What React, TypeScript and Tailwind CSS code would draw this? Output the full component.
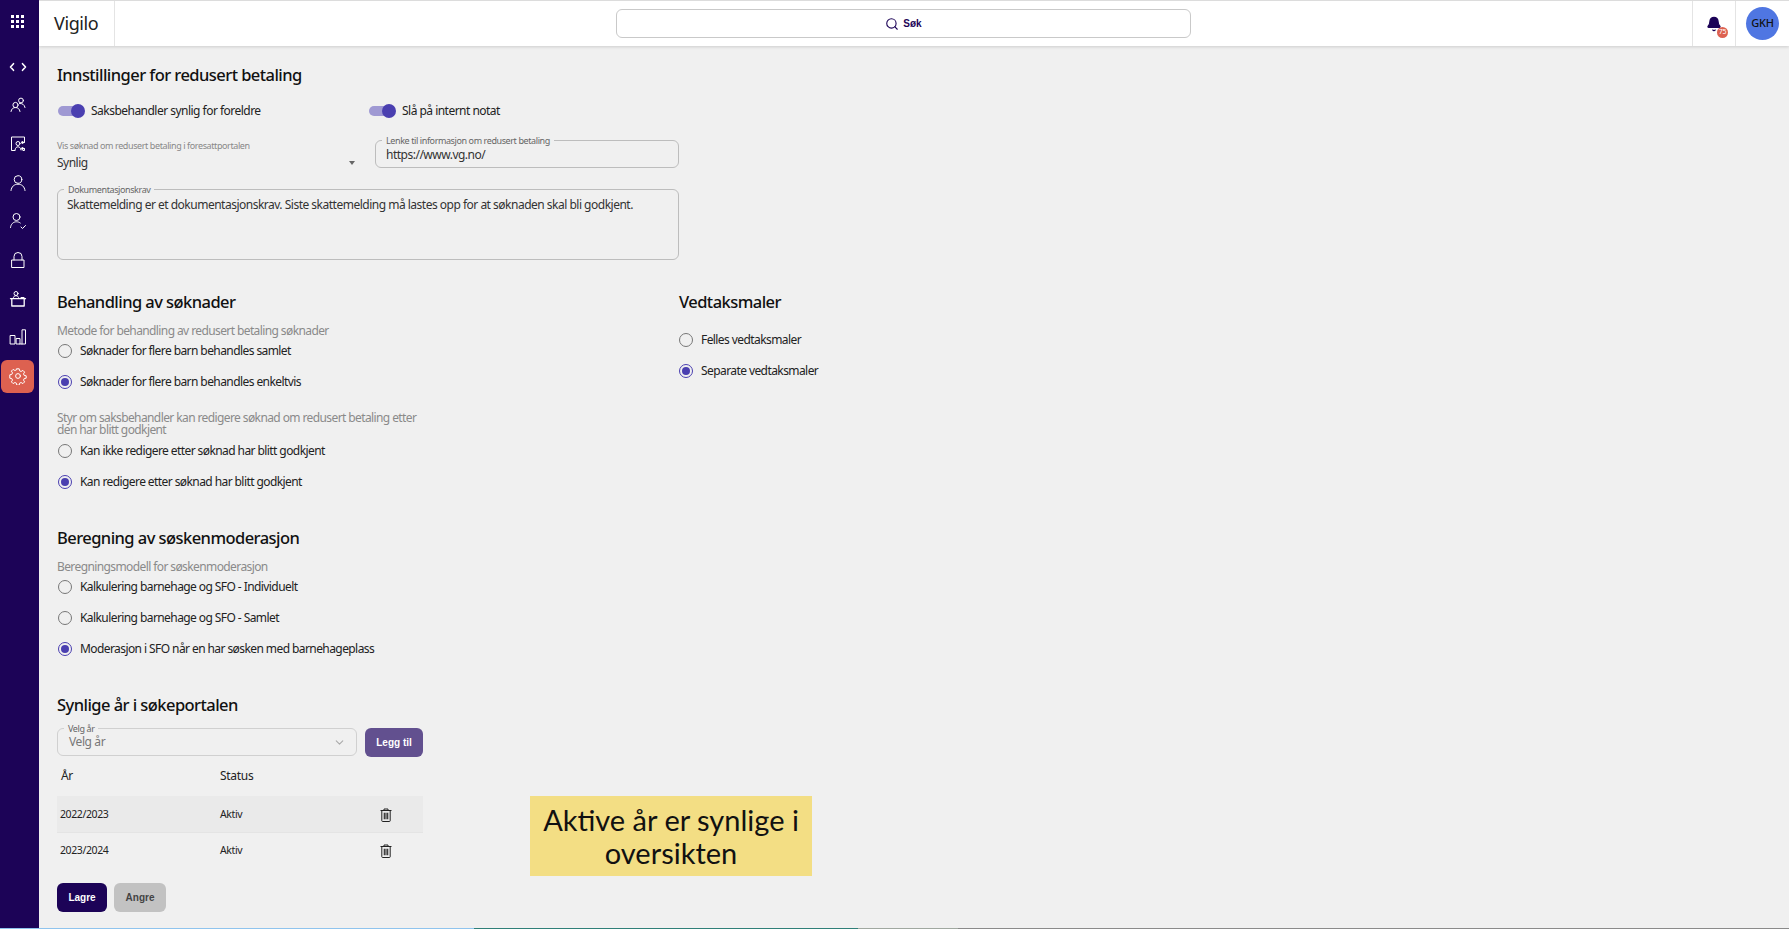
import React from 'react';
import { Bell, ChevronDown, Search } from 'lucide-react';

const font = 'font-["Noto_Sans",sans-serif]';

const SideIcon = ({ children, active = false }: { children: React.ReactNode; active?: boolean }) => (
  <div className={`flex h-[33px] w-[33px] items-center justify-center rounded-md ${active ? 'bg-[#dd6150]' : ''}`}>
    <svg width="18" height="18" viewBox="0 0 18 18" fill="none" stroke="white" strokeWidth="1" strokeLinecap="round" strokeLinejoin="round">
      {children}
    </svg>
  </div>
);

const Toggle = ({ label, className = '' }: { label: string; className?: string }) => (
  <div className={`flex items-center ${className}`}>
    <div className="relative h-[10px] w-[26px] rounded-full bg-[#9f99d3]">
      <div className="absolute -top-[2px] left-[13px] h-[14px] w-[14px] rounded-full bg-[#4a3fb0]" />
    </div>
    <span className="ml-[7px] text-[12px] leading-4 tracking-[-0.52px] text-[#222]">{label}</span>
  </div>
);

const Radio = ({ label, checked = false }: { label: string; checked?: boolean }) => (
  <div className="flex h-[31px] items-center pl-[1px]">
    <div className={`flex h-[14px] w-[14px] items-center justify-center rounded-full border-[1.5px] ${checked ? 'border-[#4a3fb0]' : 'border-[#777]'}`}>
      {checked && <div className="h-[8px] w-[8px] rounded-full bg-[#4a3fb0]" />}
    </div>
    <span className="ml-[8px] text-[12px] leading-4 tracking-[-0.58px] text-[#222]">{label}</span>
  </div>
);

const Heading = ({ children }: { children: React.ReactNode }) => (
  <h2 className="text-[16.5px] leading-6 font-medium tracking-[-0.55px] text-[#111]">{children}</h2>
);

const Hint = ({ children }: { children: React.ReactNode }) => (
  <p className="text-[12px] leading-[12px] tracking-[-0.6px] text-[#8a8a8a]">{children}</p>
);

const Legend = ({ children }: { children: React.ReactNode }) => (
  <span className="absolute -top-[6px] left-[6px] bg-[#f0f0f0] px-[4px] text-[9px] leading-[11px] tracking-[-0.4px] text-[#666]">{children}</span>
);

const Trash = () => (
  <svg width="12" height="14" viewBox="0 0 12 14" fill="none" stroke="#222" strokeWidth="1">
    <path d="M.5 2.5h11M4 2.5V1h4v1.5M1.8 2.5v10.3c0 .4.3.7.7.7h7c.4 0 .7-.3.7-.7V2.5" />
    <path d="M4.3 4.8v6.4M6 4.8v6.4M7.700 4.8v6.4" strokeWidth="1.1" />
  </svg>
);

const YearRow = ({ year, shaded = false }: { year: string; shaded?: boolean }) => (
  <div className={`flex items-center text-[10.5px] tracking-[-0.4px] text-[#222] ${shaded ? 'h-[37px] border-b border-[#e4e4e4] bg-[#eaeaea] pt-[1px]' : 'h-[36px]'}`}>
    <span className="ml-[3px] w-[160px]">{year}</span>
    <span className="w-[159.500px]">Aktiv</span>
    <Trash />
  </div>
);

export default function App() {
  return (
    <div className={`${font} flex h-[929px] w-[1789px] flex-col overflow-hidden bg-[#f0f0f0]`}>
      <div className="flex min-h-0 flex-1">
        {/* Sidebar */}
        <aside className="flex w-[39px] shrink-0 flex-col bg-[#1c0357] pt-[5px] pl-[1px]">
          <div className="flex h-[33px] w-[33px] items-center justify-center">
            <div className="grid grid-cols-3 gap-[1.5px]">
              {Array.from({ length: 9 }).map((_, i) => (
                <div key={i} className="h-[3.5px] w-[3.5px] bg-white" />
              ))}
            </div>
          </div>
          <div className="mt-[12px] flex flex-col gap-[5.7px]">
            <SideIcon>
              <path d="M4.500 5.700 1.500 9l3 3.300M13.500 5.700l3 3.300-3 3.300" strokeWidth="1.6" />
            </SideIcon>
            <SideIcon>
              <circle cx="6.500" cy="9" r="2.600" />
              <path d="M2 15.500c.4-2.600 2.200-4 4.500-4s4.100 1.400 4.500 4" />
              <circle cx="12" cy="4.500" r="2.400" />
              <path d="M10.500 7.500c2.800-.3 4.900 1 5.500 4" />
            </SideIcon>
            <SideIcon>
              <path d="M6 15.500H2.500V2h13v5.500M15.500 13.500v2H14" />
              <circle cx="9" cy="8.500" r="2" />
              <path d="M6 15c.4-2.200 1.500-3.200 3-3.200s2.600 1 3 3.200" />
              <circle cx="13.500" cy="7.500" r="1" fill="white" />
              <circle cx="13.500" cy="13.500" r="1" fill="white" />
            </SideIcon>
            <SideIcon>
              <circle cx="9" cy="5.500" r="3.800" />
              <path d="M2 16.500c.5-4 3.200-6.300 7-6.300s6.500 2.300 7 6.300" />
            </SideIcon>
            <SideIcon>
              <circle cx="7.500" cy="5" r="3.500" />
              <path d="M1.500 15.500c.4-3.500 2.800-5.700 6-5.700 1.500 0 2.800.4 3.800 1.200M12 15l1.500 1.500 3-3" />
            </SideIcon>
            <SideIcon>
              <rect x="3" y="9" width="12" height="7.500" />
              <path d="M5 9V5.500a4 4 0 0 1 8 0V9" />
            </SideIcon>
            <SideIcon>
              <circle cx="7" cy="3.500" r="2" />
              <path d="M4.300 8.500c0-1.900 1-2.800 2.700-2.800s2.700.9 2.700 2.800M12 7.500h3" />
              <path d="M1.500 8.700h15M2.800 8.700V16h12.400V8.700" strokeWidth="1.300" />
            </SideIcon>
            <SideIcon>
              <rect x="1.500" y="7.500" width="4.500" height="8.500" />
              <rect x="7.500" y="10.500" width="3.500" height="5.500" />
              <path d="M11 16h5.500V1.800h-3.500V16" />
            </SideIcon>
            <SideIcon active>
              <circle cx="9" cy="9" r="2.400" />
              <path d="M7.800 1.800h2.400l.4 2 1.500.7 1.800-1.100 1.700 1.700-1.100 1.800.7 1.500 2 .4v2.400l-2 .4-.7 1.500 1.100 1.800-1.700 1.700-1.800-1.100-1.500.7-.4 2H7.800l-.4-2-1.500-.7-1.800 1.100-1.700-1.700 1.100-1.800-.7-1.500-2-.4V7.800l2-.4.7-1.500-1.100-1.800 1.700-1.700 1.800 1.100 1.500-.7z" />
            </SideIcon>
          </div>
        </aside>

        <div className="flex min-w-0 flex-1 flex-col">
          {/* Header */}
          <header className="flex h-[46px] shrink-0 items-stretch border-t border-[#dcdcdc] bg-white shadow-[0_1px_3px_rgba(0,0,0,0.15)]">
            <div className="flex w-[76px] items-center border-r border-[#e4e4e4] pl-[15px] text-[18px] tracking-[-0.4px] text-[#222]">Vigilo</div>
            <div className="flex flex-1 items-center justify-center">
              <div className="flex h-[29px] w-[575px] items-center justify-center gap-[4px] rounded-md border border-[#c9c9c9] bg-white">
                <Search size={14} strokeWidth={1.9} className="text-[#1c0357]" />
                <span className="font-['Liberation_Sans',sans-serif] text-[10px] font-bold text-[#1c0357]">Søk</span>
              </div>
            </div>
            <div className="flex w-[44px] items-center justify-center border-x border-[#e4e4e4]">
              <div className="relative">
                <Bell size={16} className="fill-[#1c0357] text-[#1c0357]" />
                <span className="absolute -right-[6px] -bottom-[6px] flex h-[11px] w-[11px] items-center justify-center rounded-full bg-[#dd6150] text-[7px] tracking-[-0.3px] text-white">75</span>
              </div>
            </div>
            <div className="flex w-[53px] items-center justify-center">
              <div className="flex h-[33px] w-[33px] items-center justify-center rounded-full bg-[#4f76e2] text-[11px] font-medium tracking-[-0.2px] text-[#111]">GKH</div>
            </div>
          </header>

          {/* Content */}
          <main className="flex flex-col pt-[17px] pl-[18px]">
            <Heading>Innstillinger for redusert betaling</Heading>

            <div className="mt-[16px] flex h-4 pl-[1px]">
              <Toggle label="Saksbehandler synlig for foreldre" className="w-[311px]" />
              <Toggle label="Slå på internt notat" />
            </div>

            <div className="mt-[21px] flex w-[622px] gap-[23px]">
              <div className="relative h-[28px] w-[295px]">
                <p className="text-[9px] leading-[11px] tracking-[-0.4px] text-[#888]">Vis søknad om redusert betaling i foresattportalen</p>
                <p className="mt-[4px] text-[12px] leading-4 tracking-[-0.5px] text-[#333]">Synlig</p>
                <div className="absolute top-[21px] -right-[3px] h-0 w-0 border-x-[3.5px] border-t-[4px] border-x-transparent border-t-[#666]" />
              </div>
              <div className="relative flex h-[28px] flex-1 items-center rounded-md border border-[#bdbdbd] pt-[1px] pl-[10px] text-[12px] tracking-[-0.5px] text-[#333]">
                <Legend>Lenke til informasjon om redusert betaling</Legend>
                https://www.vg.no/
              </div>
            </div>

            <div className="relative mt-[21px] h-[71px] w-[622px] rounded-md border border-[#bdbdbd] px-[9px] pt-[7px] text-[12px] leading-4 tracking-[-0.5px] text-[#333]">
              <Legend>Dokumentasjonskrav</Legend>
              Skattemelding er et dokumentasjonskrav. Siste skattemelding må lastes opp for at søknaden skal bli godkjent.
            </div>

            <div className="mt-[30px] flex">
              <section className="w-[621px]">
                <Heading>Behandling av søknader</Heading>
                <div className="mt-[11px]">
                  <Hint>Metode for behandling av redusert betaling søknader</Hint>
                </div>
                <div className="-mt-[2px]">
                  <Radio label="Søknader for flere barn behandles samlet" />
                  <Radio label="Søknader for flere barn behandles enkeltvis" checked />
                </div>
                <div className="mt-[15px] w-[366px]">
                  <Hint>Styr om saksbehandler kan redigere søknad om redusert betaling etter den har blitt godkjent</Hint>
                </div>
                <div className="-mt-[1px]">
                  <Radio label="Kan ikke redigere etter søknad har blitt godkjent" />
                  <Radio label="Kan redigere etter søknad har blitt godkjent" checked />
                </div>

                <div className="mt-[29px]">
                  <Heading>Beregning av søskenmoderasjon</Heading>
                </div>
                <div className="mt-[11px]">
                  <Hint>Beregningsmodell for søskenmoderasjon</Hint>
                </div>
                <div className="-mt-[2px]">
                  <Radio label="Kalkulering barnehage og SFO - Individuelt" />
                  <Radio label="Kalkulering barnehage og SFO - Samlet" />
                  <Radio label="Moderasjon i SFO når en har søsken med barnehageplass" checked />
                </div>
              </section>
              <section>
                <div className="pl-[1px]">
                  <Heading>Vedtaksmaler</Heading>
                </div>
                <div className="mt-[10px]">
                  <Radio label="Felles vedtaksmaler" />
                  <Radio label="Separate vedtaksmaler" checked />
                </div>
              </section>
            </div>

            <div className="mt-[29px] flex items-start">
              <section className="w-[366px]">
                <Heading>Synlige år i søkeportalen</Heading>
                <div className="mt-[11px] flex gap-[8px]">
                  <div className="relative flex h-[28px] w-[300px] items-center justify-between rounded-md border border-[#d0d0d0] pr-[10px] pl-[11px] text-[12px] tracking-[-0.4px] text-[#777]">
                    <Legend>Velg år</Legend>
                    Velg år
                    <ChevronDown size={13} className="text-[#aaa]" />
                  </div>
                  <button className="h-[29px] w-[58px] rounded-md bg-[#62508f] font-['Liberation_Sans',sans-serif] text-[10px] font-bold text-white">Legg til</button>
                </div>
                <div className="mt-[10px] flex h-[17px] items-center text-[12px] tracking-[-0.3px] text-[#222]">
                  <span className="ml-[4px] w-[159px]">År</span>
                  <span>Status</span>
                </div>
                <div className="mt-[12px]">
                  <YearRow year="2022/2023" shaded />
                  <YearRow year="2023/2024" />
                </div>
                <div className="mt-[14px] flex gap-[7px]">
                  <button className="h-[29px] w-[50px] rounded-md bg-[#1c0357] font-['Liberation_Sans',sans-serif] text-[10px] font-bold text-white">Lagre</button>
                  <button className="h-[29px] w-[52px] rounded-md bg-[#c2c2c2] font-['Liberation_Sans',sans-serif] text-[10px] font-bold text-[#444]">Angre</button>
                </div>
              </section>
              <div className="mt-[103px] ml-[107px] flex h-[80px] w-[282px] items-center justify-center bg-[#f3de84] px-[4px] text-center font-['Lato',sans-serif] text-[29px] leading-[33px] text-[#111]">
                Aktive år er synlige i oversikten
              </div>
            </div>
          </main>
        </div>
      </div>
      {/* strip of the window below, cut off at the bottom of the capture */}
      <div className="flex h-[1px] shrink-0">
        <div className="w-[474px] bg-[#8fc4ee]" />
        <div className="w-[384px] bg-[#2f7f78]" />
        <div className="w-[100px] bg-[#a0a8a0]" />
        <div className="flex-1 bg-[#8a8a8a]" />
      </div>
    </div>
  );
}
